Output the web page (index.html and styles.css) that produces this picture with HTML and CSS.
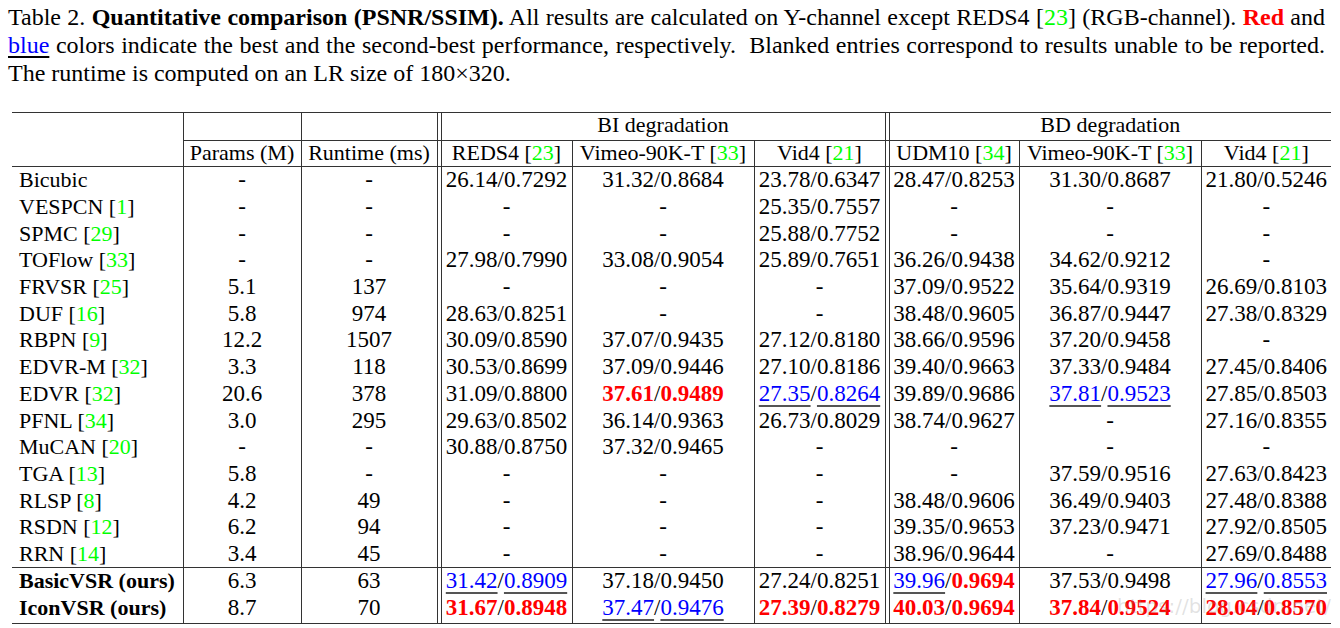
FILE: index.html
```html
<!DOCTYPE html>
<html>
<head>
<meta charset="utf-8">
<link rel="stylesheet" href="styles.css">
</head>
<body>
<div class="caption">
  <div class="cl">Table 2. <b>Quantitative comparison (PSNR/SSIM).</b> All results are calculated on Y-channel except REDS4 [<span class="g">23</span>] (RGB-channel). <b class="r">Red</b> and</div>
  <div class="cl"><span class="link">blue</span> colors indicate the best and the second-best performance, respectively.&nbsp; Blanked entries correspond to results unable to be reported.</div>
  <div class="cl last">The runtime is computed on an LR size of 180×320.</div>
</div>
<div class="wrap">
<table class="t">
  <colgroup>
    <col class="w1"><col class="w2"><col class="w3"><col class="ws">
    <col class="w4"><col class="w5"><col class="w4"><col class="ws">
    <col class="w7"><col class="w5"><col class="w7">
  </colgroup>
  <thead>
    <tr class="h1">
      <th rowspan="2" class="name vr"></th>
      <th class="vr bb"></th>
      <th class="vr bb"></th>
      <th class="sp bb"></th>
      <th colspan="3" class="vr bb">BI degradation</th>
      <th class="sp bb"></th>
      <th colspan="3" class="bb">BD degradation</th>
    </tr>
    <tr class="h2">
      <th class="vr">Params (M)</th>
      <th class="vr">Runtime (ms)</th>
      <th class="sp"></th>
      <th class="vr">REDS4 [<span class="g">23</span>]</th>
      <th class="vr">Vimeo-90K-T [<span class="g">33</span>]</th>
      <th class="vr">Vid4 [<span class="g">21</span>]</th>
      <th class="sp"></th>
      <th class="vr">UDM10 [<span class="g">34</span>]</th>
      <th class="vr">Vimeo-90K-T [<span class="g">33</span>]</th>
      <th>Vid4 [<span class="g">21</span>]</th>
    </tr>
  </thead>
  <tbody>
    <tr><td class="name">Bicubic</td><td>-</td><td>-</td><td class="sp"></td><td>26.14/0.7292</td><td>31.32/0.8684</td><td>23.78/0.6347</td><td class="sp"></td><td>28.47/0.8253</td><td>31.30/0.8687</td><td>21.80/0.5246</td></tr>
    <tr><td class="name">VESPCN [<span class="g">1</span>]</td><td>-</td><td>-</td><td class="sp"></td><td>-</td><td>-</td><td>25.35/0.7557</td><td class="sp"></td><td>-</td><td>-</td><td>-</td></tr>
    <tr><td class="name">SPMC [<span class="g">29</span>]</td><td>-</td><td>-</td><td class="sp"></td><td>-</td><td>-</td><td>25.88/0.7752</td><td class="sp"></td><td>-</td><td>-</td><td>-</td></tr>
    <tr><td class="name">TOFlow [<span class="g">33</span>]</td><td>-</td><td>-</td><td class="sp"></td><td>27.98/0.7990</td><td>33.08/0.9054</td><td>25.89/0.7651</td><td class="sp"></td><td>36.26/0.9438</td><td>34.62/0.9212</td><td>-</td></tr>
    <tr><td class="name">FRVSR [<span class="g">25</span>]</td><td>5.1</td><td>137</td><td class="sp"></td><td>-</td><td>-</td><td>-</td><td class="sp"></td><td>37.09/0.9522</td><td>35.64/0.9319</td><td>26.69/0.8103</td></tr>
    <tr><td class="name">DUF [<span class="g">16</span>]</td><td>5.8</td><td>974</td><td class="sp"></td><td>28.63/0.8251</td><td>-</td><td>-</td><td class="sp"></td><td>38.48/0.9605</td><td>36.87/0.9447</td><td>27.38/0.8329</td></tr>
    <tr><td class="name">RBPN [<span class="g">9</span>]</td><td>12.2</td><td>1507</td><td class="sp"></td><td>30.09/0.8590</td><td>37.07/0.9435</td><td>27.12/0.8180</td><td class="sp"></td><td>38.66/0.9596</td><td>37.20/0.9458</td><td>-</td></tr>
    <tr><td class="name">EDVR-M [<span class="g">32</span>]</td><td>3.3</td><td>118</td><td class="sp"></td><td>30.53/0.8699</td><td>37.09/0.9446</td><td>27.10/0.8186</td><td class="sp"></td><td>39.40/0.9663</td><td>37.33/0.9484</td><td>27.45/0.8406</td></tr>
    <tr><td class="name">EDVR [<span class="g">32</span>]</td><td>20.6</td><td>378</td><td class="sp"></td><td>31.09/0.8800</td><td><b class="r">37.61</b>/<b class="r">0.9489</b></td><td><span class="b">27.35</span>/<span class="b">0.8264</span></td><td class="sp"></td><td>39.89/0.9686</td><td><span class="b">37.81</span>/<span class="b">0.9523</span></td><td>27.85/0.8503</td></tr>
    <tr><td class="name">PFNL [<span class="g">34</span>]</td><td>3.0</td><td>295</td><td class="sp"></td><td>29.63/0.8502</td><td>36.14/0.9363</td><td>26.73/0.8029</td><td class="sp"></td><td>38.74/0.9627</td><td>-</td><td>27.16/0.8355</td></tr>
    <tr><td class="name">MuCAN [<span class="g">20</span>]</td><td>-</td><td>-</td><td class="sp"></td><td>30.88/0.8750</td><td>37.32/0.9465</td><td>-</td><td class="sp"></td><td>-</td><td>-</td><td>-</td></tr>
    <tr><td class="name">TGA [<span class="g">13</span>]</td><td>5.8</td><td>-</td><td class="sp"></td><td>-</td><td>-</td><td>-</td><td class="sp"></td><td>-</td><td>37.59/0.9516</td><td>27.63/0.8423</td></tr>
    <tr><td class="name">RLSP [<span class="g">8</span>]</td><td>4.2</td><td>49</td><td class="sp"></td><td>-</td><td>-</td><td>-</td><td class="sp"></td><td>38.48/0.9606</td><td>36.49/0.9403</td><td>27.48/0.8388</td></tr>
    <tr><td class="name">RSDN [<span class="g">12</span>]</td><td>6.2</td><td>94</td><td class="sp"></td><td>-</td><td>-</td><td>-</td><td class="sp"></td><td>39.35/0.9653</td><td>37.23/0.9471</td><td>27.92/0.8505</td></tr>
    <tr class="sep"><td class="name">RRN [<span class="g">14</span>]</td><td>3.4</td><td>45</td><td class="sp"></td><td>-</td><td>-</td><td>-</td><td class="sp"></td><td>38.96/0.9644</td><td>-</td><td>27.69/0.8488</td></tr>
    <tr class="ours"><td class="name"><b>BasicVSR (ours)</b></td><td>6.3</td><td>63</td><td class="sp"></td><td><span class="b">31.42</span>/<span class="b">0.8909</span></td><td>37.18/0.9450</td><td>27.24/0.8251</td><td class="sp"></td><td><span class="b">39.96</span>/<b class="r">0.9694</b></td><td>37.53/0.9498</td><td><span class="b">27.96</span>/<span class="b">0.8553</span></td></tr>
    <tr class="end"><td class="name"><b>IconVSR (ours)</b></td><td>8.7</td><td>70</td><td class="sp"></td><td><b class="r">31.67</b>/<b class="r">0.8948</b></td><td><span class="b">37.47</span>/<span class="b">0.9476</span></td><td><b class="r">27.39</b>/<b class="r">0.8279</b></td><td class="sp"></td><td><b class="r">40.03</b>/<b class="r">0.9694</b></td><td><b class="r">37.84</b>/<b class="r">0.9524</b></td><td><b class="r">28.04</b>/<b class="r">0.8570</b></td></tr>
  </tbody>
</table>
<div class="wm">https://blog.csdn.net/</div>
</div>
</body>
</html>
```
FILE: styles.css
```css
html, body {
  margin: 0;
  padding: 0;
  background: #fff;
}
body {
  font-family: "Liberation Serif", "Times New Roman", serif;
  color: #000;
  width: 1340px;
  height: 628px;
  overflow: hidden;
}
.caption {
  padding: 3px 15px 0 8px;
  font-size: 24px;
  line-height: 28px;
}
.cl {
  text-align: justify;
  text-align-last: justify;
  white-space: nowrap;
}
.cl.last {
  text-align-last: left;
}
.g { color: #00ff00; }
.r { color: #ff0000; font-weight: bold; }
.link {
  color: #0000ff;
  text-decoration: underline;
  text-decoration-color: #000;
  text-underline-offset: 3px;
}
.b {
  color: #0000ff;
  text-decoration: underline;
  text-decoration-color: #555;
  text-underline-offset: 4px;
}
.wrap {
  position: relative;
  margin: 25px 0 0 12px;
  width: 1319px;
}
.t {
  border-collapse: collapse;
  table-layout: fixed;
  width: 1319px;
  border-top: 1px solid #333;
  border-bottom: 1px solid #333;
}
.w1 { width: 171px; }
.w2 { width: 118px; }
.w3 { width: 136px; }
.ws { width: 4px; }
.w4 { width: 131px; }
.w5 { width: 182px; }
.w7 { width: 130px; }
th, td {
  padding: 0;
  text-align: center;
  vertical-align: middle;
  white-space: nowrap;
  font-weight: normal;
  border-right: 1px solid #333;
}
th:last-child, td:last-child { border-right: none; }
th {
  font-size: 22px;
}
.h1 th { height: 23px; line-height: 23px; padding-bottom: 4px; }
.h2 th { height: 23px; line-height: 23px; padding-bottom: 2px; border-bottom: 1px solid #333; }
.h1 .name { border-bottom: 1px solid #333; padding-bottom: 0; }
.bb { border-bottom: 1px solid #333; }
td {
  font-size: 23px;
  height: 26.7px;
  line-height: 26px;
}
td.name {
  font-size: 22px;
  text-align: left;
  padding-left: 7px;
}
td.name b { font-weight: bold; }
.sep td { border-bottom: 1px solid #333; }
.ours td { height: 26px; padding-bottom: 1px; }
.end td { height: 26px; padding-bottom: 2px; }
.wm {
  position: absolute;
  right: 0;
  bottom: 6px;
  font-family: "DejaVu Sans", sans-serif;
  font-size: 20px;
  color: rgba(140, 140, 140, 0.25);
  pointer-events: none;
}
```
